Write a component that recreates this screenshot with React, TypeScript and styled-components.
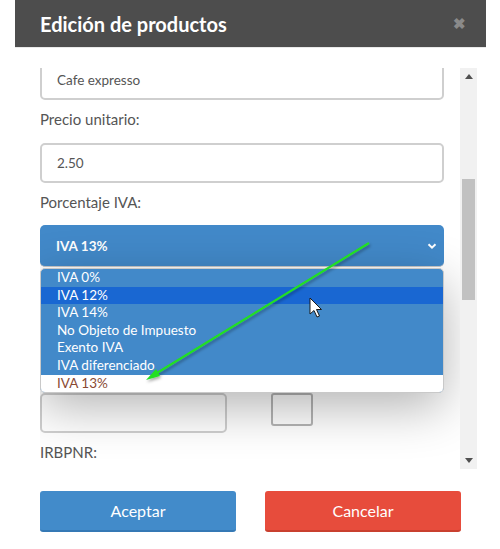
import { useLayoutEffect, useRef } from 'react';
import styled, { createGlobalStyle } from 'styled-components';

const GlobalStyle = createGlobalStyle`
  html, body {
    margin: 0;
    padding: 0;
    background: #ffffff;
    font-family: Lato, "Open Sans", "Liberation Sans", sans-serif;
  }
`;

const S = {
  Page: styled.div`
    position: relative;
    width: 500px;
    height: 549px;
    overflow: hidden;
    background: #ffffff;
  `,
  Modal: styled.div`
    margin-left: 15px;
    width: 471px;
    height: 549px;
    background: #ffffff;
    display: flex;
    flex-direction: column;
  `,
  Header: styled.div`
    height: 47px;
    display: flex;
    align-items: center;
    justify-content: space-between;
    padding: 0 20px 0 25px;
    background: #4d4d4d;
    border-bottom: 1px solid #e9e9e9;
  `,
  Title: styled.h1`
    margin: 0;
    font-size: 20px;
    font-weight: 700;
    color: #ffffff;
  `,
  Close: styled.span`
    font-size: 15px;
    font-weight: 700;
    color: #8a8a8a;
    line-height: 1;
  `,
  Body: styled.div`
    display: flex;
    margin: 20px 9px 0 25px;
    height: 401px;
  `,
  Scroller: styled.div`
    position: relative;
    flex: 1;
    overflow: hidden;
    padding-right: 16px;
  `,
  Field: styled.div<{ $mb?: number }>`
    display: flex;
    flex-direction: column;
    gap: 14px;
    margin-bottom: ${({ $mb }) => $mb ?? 9}px;
  `,
  Row: styled.div`
    display: flex;
    gap: 44px;
  `,
  Label: styled.label`
    font-size: 15px;
    line-height: 20px;
    color: #555555;
  `,
  Input: styled.div<{ $w?: number }>`
    box-sizing: border-box;
    width: ${({ $w }) => ($w ? `${$w}px` : '100%')};
    height: 40px;
    border: 2px solid #cfcfcf;
    border-radius: 5px;
    padding: 0 15px;
    display: flex;
    align-items: center;
    font-size: 13.5px;
    color: #555555;
    background: #ffffff;
  `,
  SelectWrap: styled.div`
    position: relative;
    margin-bottom: 9px;
  `,
  Select: styled.div`
    box-sizing: border-box;
    height: 42px;
    border-radius: 5px;
    background: #4289c9;
    color: #ffffff;
    font-size: 13.5px;
    font-weight: 700;
    display: flex;
    align-items: center;
    justify-content: space-between;
    padding: 0 6px 0 16px;
    border-bottom: 1px solid #c8c8c8;
  `,
  Options: styled.ul`
    position: absolute;
    z-index: 2;
    top: 43px;
    left: 0;
    right: 0;
    margin: 0;
    padding: 0;
    list-style: none;
    background: #4289c9;
    border-radius: 5px;
    overflow: hidden;
    border: 1px solid #c9c9c9;
    box-shadow: 0 14px 50px rgba(0, 0, 0, 0.3);
  `,
  Option: styled.li<{ $state?: 'hover' | 'selected' }>`
    height: 17.6px;
    line-height: 17.6px;
    padding-left: 16px;
    font-size: 13.5px;
    color: ${({ $state }) => ($state === 'selected' ? '#8a4a32' : '#ffffff')};
    background: ${({ $state }) =>
      $state === 'hover' ? '#1967d2' : $state === 'selected' ? '#ffffff' : 'transparent'};
  `,
  CheckBox: styled.div`
    box-sizing: border-box;
    width: 42px;
    height: 33px;
    border: 2px solid #b5b5b5;
    border-radius: 3px;
  `,
  Track: styled.div`
    width: 17px;
    background: #f1f1f1;
    display: flex;
    flex-direction: column;
    align-items: center;
    justify-content: space-between;
    padding: 6px 0;
    box-sizing: border-box;
    position: relative;
  `,
  Thumb: styled.div`
    position: absolute;
    left: 2px;
    right: 2px;
    top: 111px;
    height: 121px;
    background: #c1c1c1;
  `,
  Footer: styled.div`
    display: flex;
    justify-content: space-between;
    margin: 22px 25px 0 25px;
  `,
  Button: styled.button<{ $variant: 'primary' | 'danger' }>`
    width: 196px;
    height: 41px;
    border: none;
    border-radius: 3px;
    font-family: inherit;
    font-size: 16px;
    color: #ffffff;
    background: ${({ $variant }) => ($variant === 'primary' ? '#428bca' : '#e74c3c')};
    border-bottom: 2px solid ${({ $variant }) => ($variant === 'primary' ? '#3579b5' : '#c9402f')};
  `,
  Overlay: styled.svg`
    position: absolute;
    inset: 0;
    pointer-events: none;
    z-index: 5;
  `,
};

const options = [
  'IVA 0%',
  'IVA 12%',
  'IVA 14%',
  'No Objeto de Impuesto',
  'Exento IVA',
  'IVA diferenciado',
  'IVA 13%',
];

function Chevron() {
  return (
    <svg width="12" height="12" viewBox="0 0 12 12">
      <path d="M2.5 4.2 6 7.6 9.5 4.2" fill="none" stroke="#ffffff" strokeWidth="2" />
    </svg>
  );
}

function Arrow({ down }: { down?: boolean }) {
  return (
    <svg width="8" height="5" viewBox="0 0 8 5">
      <path d={down ? 'M0 0h8L4 5z' : 'M0 5h8L4 0z'} fill="#505050" />
    </svg>
  );
}

function App() {
  const scrollRef = useRef<HTMLDivElement>(null);

  useLayoutEffect(() => {
    if (scrollRef.current) scrollRef.current.scrollTop = 42;
  }, []);

  return (
    <S.Page>
      <GlobalStyle />
      <S.Modal>
        <S.Header>
          <S.Title>Edición de productos</S.Title>
          <S.Close>✖</S.Close>
        </S.Header>
        <S.Body>
          <S.Scroller ref={scrollRef}>
            <S.Field>
              <S.Label>Descripción:</S.Label>
              <S.Input>Cafe expresso</S.Input>
            </S.Field>
            <S.Field>
              <S.Label>Precio unitario:</S.Label>
              <S.Input>2.50</S.Input>
            </S.Field>
            <S.Field $mb={13}>
              <S.Label>Porcentaje IVA:</S.Label>
            </S.Field>
            <S.SelectWrap>
              <S.Select>
                IVA 13%
                <Chevron />
              </S.Select>
              <S.Options>
                {options.map((o, i) => (
                  <S.Option
                    key={o}
                    $state={i === 1 ? 'hover' : i === options.length - 1 ? 'selected' : undefined}
                  >
                    {o}
                  </S.Option>
                ))}
              </S.Options>
            </S.SelectWrap>
            <S.Field>
              <S.Label>Porcentaje ICE:</S.Label>
              <S.Input>0</S.Input>
            </S.Field>
            <S.Row>
              <S.Field>
                <S.Label>Valor ICE:</S.Label>
                <S.Input $w={187}> </S.Input>
              </S.Field>
              <S.Field>
                <S.Label>Aplica:</S.Label>
                <S.CheckBox />
              </S.Field>
            </S.Row>
            <S.Field>
              <S.Label>IRBPNR:</S.Label>
              <S.Input> </S.Input>
            </S.Field>
          </S.Scroller>
          <S.Track>
            <Arrow />
            <S.Thumb />
            <Arrow down />
          </S.Track>
        </S.Body>
        <S.Footer>
          <S.Button $variant="primary">Aceptar</S.Button>
          <S.Button $variant="danger">Cancelar</S.Button>
        </S.Footer>
      </S.Modal>
      <S.Overlay width="500" height="549" viewBox="0 0 500 549">
        <defs>
          <filter id="sh" x="-20%" y="-20%" width="140%" height="140%">
            <feDropShadow dx="1" dy="2" stdDeviation="1.5" floodColor="#000" floodOpacity="0.35" />
          </filter>
        </defs>
        <g filter="url(#sh)">
          <line x1="369" y1="243" x2="152" y2="376" stroke="#22e022" strokeWidth="2.2" />
          <path d="M146 380 L156 369 L160 376 Z" fill="#22e022" />
        </g>
        <path
          d="M310 298 L310 314 L314 310.5 L317 317 L319.5 316 L316.5 309.5 L321.5 309.5 Z"
          fill="#ffffff"
          stroke="#1a1a1a"
          strokeWidth="1"
          strokeLinejoin="round"
        />
      </S.Overlay>
    </S.Page>
  );
}

export default App;
